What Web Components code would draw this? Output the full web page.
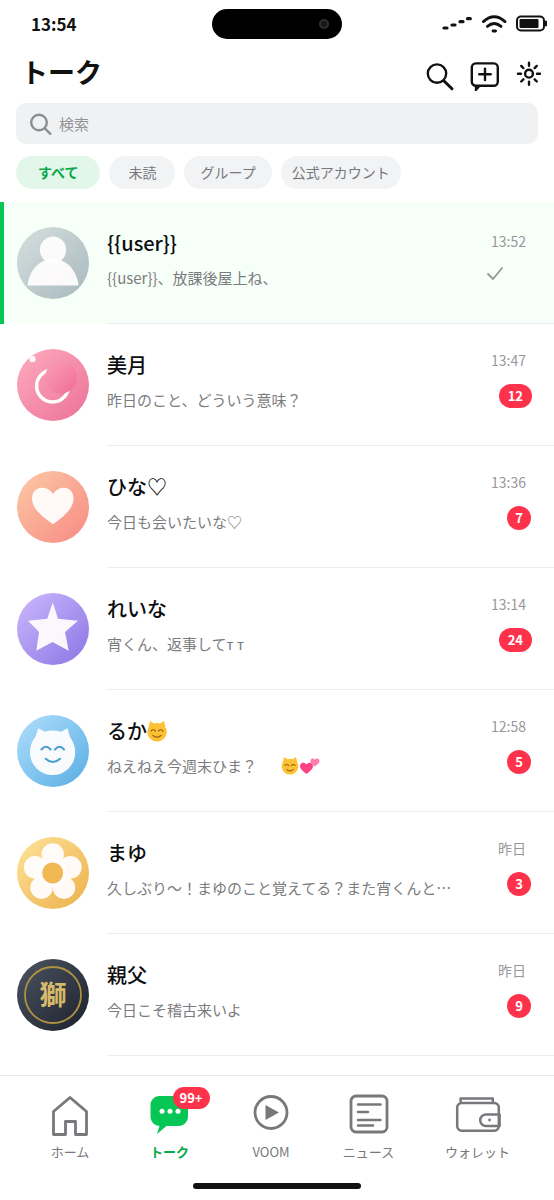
<!DOCTYPE html>
<html lang="ja">
<head>
<meta charset="utf-8">
<meta name="viewport" content="width=device-width, initial-scale=1">
<title>トーク</title>
<style>
  html { height: 100%; }
  body {
    margin: 0;
    min-height: 100%;
    display: flex;
    flex-direction: column;
    background: #fff;
    color: #111;
    font-family: "Noto Sans CJK JP", "Noto Sans", sans-serif;
  }
  main { flex: 1; }
</style>
</head>
<body>
<status-bar>13:54</status-bar>
<page-header>トーク</page-header>
<search-box label="検索"></search-box>
<filter-bar>
  <filter-chip active style="--pad: 22px">すべて</filter-chip>
  <filter-chip style="--pad: 19px">未読</filter-chip>
  <filter-chip style="--pad: 16px">グループ</filter-chip>
  <filter-chip style="--pad: 11px">公式アカウント</filter-chip>
</filter-bar>
<main>
  <chat-row selected time="13:52">
    <chat-avatar slot="avatar" kind="person"></chat-avatar>
    <span slot="name">{{user}}</span>{{user}}、放課後屋上ね、
  </chat-row>
  <chat-row time="13:47" unread="12">
    <chat-avatar slot="avatar" kind="moon"></chat-avatar>
    <span slot="name">美月</span>昨日のこと、どういう意味？
  </chat-row>
  <chat-row time="13:36" unread="7">
    <chat-avatar slot="avatar" kind="heart"></chat-avatar>
    <span slot="name">ひな♡</span>今日も会いたいな♡
  </chat-row>
  <chat-row time="13:14" unread="24">
    <chat-avatar slot="avatar" kind="star"></chat-avatar>
    <span slot="name">れいな</span>宵くん、返事してᴛ ᴛ
  </chat-row>
  <chat-row time="12:58" unread="5">
    <chat-avatar slot="avatar" kind="cat"></chat-avatar>
    <span slot="name">るか<cat-face></cat-face></span>ねえねえ今週末ひま？<cat-face spaced></cat-face><two-hearts></two-hearts>
  </chat-row>
  <chat-row time="昨日" unread="3">
    <chat-avatar slot="avatar" kind="flower"></chat-avatar>
    <span slot="name">まゆ</span>久しぶり〜！まゆのこと覚えてる？また宵くんと…
  </chat-row>
  <chat-row time="昨日" unread="9">
    <chat-avatar slot="avatar" kind="lion"></chat-avatar>
    <span slot="name">親父</span>今日こそ稽古来いよ
  </chat-row>
</main>
<tab-bar>
  <tab-item icon="home">ホーム</tab-item>
  <tab-item icon="talk" active badge="99+">トーク</tab-item>
  <tab-item icon="voom">VOOM</tab-item>
  <tab-item icon="news">ニュース</tab-item>
  <tab-item icon="wallet">ウォレット</tab-item>
</tab-bar>

<script>
const define = (name, render) => customElements.define(name, class extends HTMLElement {
  constructor() { super(); this.attachShadow({ mode: 'open' }); }
  connectedCallback() { this.shadowRoot.innerHTML = render(this); }
});

define('status-bar', () => `
<style>
  :host { display: grid; grid-template-columns: 1fr 130px 1fr; align-items: center; height: 48px; }
  .time { padding-left: 31px; font-size: 17px; line-height: 24px; font-weight: 700; }
  .island { height: 30px; border-radius: 15px; background: #000; display: flex; align-items: center; justify-content: flex-end; }
  .lens { width: 6px; height: 6px; border: 2px solid #2d2e32; border-radius: 50%; background: #17181a; margin-right: 13px; }
  .icons { display: flex; justify-content: flex-end; gap: 9px; padding-right: 7px; }
  svg { display: block; }
</style>
<div class="time"><slot></slot></div>
<div class="island"><div class="lens"></div></div>
<div class="icons">
  <svg width="31" height="20" fill="none" stroke="#111" stroke-width="3.200" stroke-linecap="round"><path d="M3 14h3M11 11h3M19 7.700h3M26.500 4.700h2.800"/></svg>
  <svg width="26" height="20" fill="none" stroke="#111" stroke-width="2.800" stroke-linecap="round"><path d="M2.400 7.600Q13.200-2.200 24 7.600M6.400 12.400Q13.200 6.600 20 12.400"/><path d="M12 17h2.600"/></svg>
  <svg width="31" height="20"><rect x="1" y="2.500" width="27" height="14" rx="4" fill="none" stroke="#111" stroke-width="2"/><rect x="3.500" y="5" width="19" height="9" rx="1" fill="#111"/><rect x="29" y="6.500" width="2" height="6" rx="1" fill="#111"/></svg>
</div>`);

define('page-header', () => `
<style>
  :host { display: flex; justify-content: space-between; height: 55px; padding: 0 10px 0 21px; box-sizing: border-box; }
  h1 { margin: 4px 0 0; font-size: 27px; line-height: 40px; font-weight: 700; }
  .actions { display: flex; gap: 14px; padding-top: 13px; }
  button { all: unset; cursor: pointer; width: 30px; height: 30px; }
  svg { display: block; fill: none; stroke: #111; stroke-width: 2.400; stroke-linecap: round; }
</style>
<h1><slot></slot></h1>
<div class="actions">
  <button aria-label="検索"><svg width="30" height="30"><circle cx="11" cy="12.600" r="9.200"/><path stroke-width="3" d="M18 20l8 7.800"/></svg></button>
  <button aria-label="新規トーク"><svg width="30" height="30"><rect x="1.800" y="2.400" width="26" height="22.400" rx="4"/><path d="M9.200 13.300h11.500M15 7.600v11.500"/><path d="M5.600 24.500v5.300l4.200-4.800" fill="#111" stroke-width="1.600" stroke-linejoin="round"/></svg></button>
  <button aria-label="設定"><svg width="30" height="30"><circle cx="15" cy="12.700" r="3.900"/><path d="M15 1.700v3M15 20.700v3M4 12.700h3M23 12.700h3M7.200 4.900l2.200 2.200M20.600 18.300l2.200 2.200M22.800 4.900l-2.200 2.200M9.400 18.300l-2.200 2.200"/></svg></button>
</div>`);

define('search-box', el => `
<style>
  :host { display: block; padding: 0 16px; }
  label { display: flex; align-items: center; gap: 7px; height: 41px; padding: 0 12px; border-radius: 10px; background: #f0f1f3; }
  svg { flex: none; fill: none; stroke: #8c8d90; stroke-width: 2.400; stroke-linecap: round; }
  input { all: unset; flex: 1; min-width: 0; font: inherit; font-size: 15px; line-height: 22px; color: #111; }
  input::placeholder { color: #929397; opacity: 1; }
</style>
<label><svg width="24" height="24" aria-hidden="true"><circle cx="11" cy="10.500" r="7.800"/><path d="M17 16.500l5.300 5.300"/></svg><input type="search" aria-label="${el.getAttribute('label')}" placeholder="${el.getAttribute('label')}"></label>`);

define('filter-bar', () => `
<style>:host { display: flex; gap: 9px; padding: 12px 16px 13px; }</style><slot></slot>`);

define('filter-chip', el => `
<style>
  :host { display: block; }
  button { all: unset; display: block; box-sizing: border-box; cursor: pointer; height: 33px; padding: 0 var(--pad); border-radius: 17px; background: #f2f3f5; color: #77787b; font-size: 14px; line-height: 33px; white-space: nowrap; }
  :host([active]) button { background: #e2f7e9; color: #0aa84a; font-weight: 700; }
</style>
<button aria-pressed="${el.hasAttribute('active')}"><slot></slot></button>`);

define('chat-row', el => {
  const unread = el.getAttribute('unread');
  return `
<style>
  :host { display: block; }
  a { display: grid; grid-template-columns: 72px minmax(0, 1fr); column-gap: 18px; padding-left: 17px; color: inherit; text-decoration: none; }
  .avatar { padding-top: 25px; }
  .body { display: flex; justify-content: space-between; height: 121px; border-bottom: 1px solid #ececef; }
  .text { min-width: 0; padding-top: 26px; }
  .name { font-size: 20px; line-height: 30px; font-weight: 500; color: #0c0d0e; white-space: nowrap; }
  .message { margin-top: 8px; font-size: 15px; line-height: 24px; color: #7b7c80; white-space: nowrap; overflow: hidden; text-overflow: ellipsis; }
  .meta { display: flex; flex-direction: column; align-items: flex-end; flex: none; padding: 26px 22px 0 0; }
  time { margin-right: 6px; font-size: 14px; line-height: 20px; color: #97989c; }
  .badge { box-sizing: border-box; min-width: 24px; height: 24px; margin-top: 14px; padding: 0 9px; border-radius: 12px; background: #fe334b; color: #fff; font-size: 13px; line-height: 24px; font-weight: 700; text-align: center; }
  .badge.single { padding: 0; margin-right: 1px; }
  .read { margin: 14px 28px 0 0; }
  :host([selected]) a { background: #f7fff9; padding-left: 13px; border-left: 4px solid #06c755; }
  :host([selected]) .meta { padding-top: 29px; }
</style>
<a href="#">
  <div class="avatar"><slot name="avatar"></slot></div>
  <div class="body">
    <div class="text">
      <div class="name"><slot name="name"></slot></div>
      <div class="message"><slot></slot></div>
    </div>
    <div class="meta">
      <time>${el.getAttribute('time')}</time>
      ${unread ? `<span class="badge${unread.length < 2 ? ' single' : ''}">${unread}</span>`
        : `<svg class="read" width="18" height="18" fill="none" stroke="#8f9894" stroke-width="1.800" role="img" aria-label="既読"><path d="M1.500 8.500l5.500 5.500L16.500 2.500"/></svg>`}
    </div>
  </div>
</a>`;
});

const avatars = {
  person: ['#d6dfdf', '#a7b9be', `<circle cx="36" cy="22.800" r="13.200"/><path d="M10.500 58.500C12 44 22 32 36 32s24 12 25.500 26.500z"/>`],
  moon: ['#fdacbd', '#ec7199', `<circle cx="15.500" cy="10" r="3.200"/><circle cx="35.600" cy="37" r="16" fill="none" stroke="#fff" stroke-width="3.400"/><circle cx="44" cy="28.500" r="16" fill="url(#m)" fill-opacity="1"/>`],
  heart: ['#fcc9a4', '#f78a84', `<path d="M36 53.200C25 45.500 15 37.500 15 27.500c0-6.500 4.500-10.800 10-10.800 4.800 0 8.800 2.600 11 6.300 2.200-3.700 6.200-6.300 11-6.300 5.500 0 9.500 4.300 9.500 10.800 0 10-9.500 18-20.500 25.700z"/>`],
  star: ['#cdb9fc', '#8975e4', `<path d="M35.800 9.500L41 25.700l20 2L48 39l3.700 18.700L35.500 49l-16.200 8.700L22 39 11 27.700l19.300-2z"/>`],
  cat: ['#b0dffc', '#58ade4', `<path d="M21.300 13.200l6.200 3.600q8-2.600 16.500 0l6.500-3.600 2.500 8.800c3.300 5 5.200 9 5.200 15.500a22.600 22.600 0 0 1-45.200 0C13 31 15 26 18.800 21z"/><path d="M24.500 34.500q4.500-5.500 9 0M38 34.500q4.500-5.500 9 0M28.700 43.700q7 6.500 14.400 0" fill="none" stroke="#459ed2" stroke-width="2" stroke-linecap="round"/>`],
  flower: ['#fde39a', '#edb04a', `<circle cx="35.700" cy="17.500" r="11.200"/><circle cx="53.500" cy="30.300" r="11.200"/><circle cx="47" cy="50.700" r="11.200"/><circle cx="24.500" cy="50.700" r="11.200"/><circle cx="18" cy="30.300" r="11.200"/><circle cx="35.700" cy="36" r="14"/><circle cx="35.700" cy="36" r="10.500" fill="#efb54c"/>`],
  lion: ['#4c5462', '#1c212c', `<circle cx="36" cy="36" r="28" fill="none" stroke="#ad9242" stroke-width="1.800"/><text x="36" y="45.500" text-anchor="middle" font-size="27" font-weight="700" fill="#e2c36c">獅</text>`],
};
define('chat-avatar', el => {
  const [from, to, art] = avatars[el.getAttribute('kind')];
  return `
<style>
  :host { display: block; width: 72px; height: 72px; border-radius: 50%; overflow: hidden; background: linear-gradient(135deg, ${from}, ${to}); }
  svg { display: block; fill: #fffdfd; fill-opacity: .95; }
</style>
<svg width="72" height="72" aria-hidden="true"><defs><linearGradient id="m" x1="0" y1="0" x2="1" y2="1"><stop offset="0" stop-color="#fa9fb6"/><stop offset="1" stop-color="#ef6c98"/></linearGradient></defs>${art}</svg>`;
});

define('cat-face', el => `
<style>
  :host { display: inline-block; width: 20px; height: 21px; vertical-align: -3px; }
  :host([spaced]) { width: 18px; height: 18px; margin-left: 24px; }
  svg { display: block; width: 100%; height: 100%; }
</style>
<svg viewBox="0 0 20 21" aria-hidden="true"><path d="M3 0l4 2.500q3-.8 6 0L17 0l1.400 6a9.700 9.700 0 1 1-16.800 0z" fill="#fcc135"/><path d="M4 10q2.200-2.500 4.500 0M11.500 10q2.200-2.500 4.500 0M6 14.500q4 3.400 8 0" fill="none" stroke="#9b641d" stroke-width="1.200" stroke-linecap="round"/></svg>`);

define('two-hearts', () => `
<style>:host { display: inline-block; width: 20px; height: 18px; margin-left: 1px; vertical-align: -3px; } svg { display: block; }</style>
<svg width="20" height="18" aria-hidden="true"><path d="M6.500 17C2 13.500 0 11.500 0 9c0-3.500 4.500-4.700 6.500-1.500C8.500 4.300 13 5.500 13 9c0 2.500-2 4.500-6.500 8z" fill="#fb4284"/><path d="M14.800 9.500c-3-2.300-4.400-3.700-4.400-5.500 0-2.600 3-3.400 4.400-1.200 1.400-2.200 4.700-1.400 4.700 1.200 0 1.800-1.700 3.200-4.700 5.500z" fill="#ff7bac"/></svg>`);

define('tab-bar', () => `
<style>
  :host { display: block; border-top: 1px solid #e9e9eb; background: #fff; }
  nav { display: grid; grid-template-columns: 100fr 99fr 104fr 91fr 127fr; height: 107px; padding: 0 13px 0 20px; }
  .home { width: 168px; height: 6px; margin: 0 auto 11px; border-radius: 3px; background: #111; }
</style>
<nav><slot></slot></nav>
<div class="home"></div>`);

const icons = {
  home: `<path d="M6.500 18.500L23 4.500l16.500 14v23H28.500V28.500h-10v13h-12z"/>`,
  talk: `<path d="M12 3h20a9 9 0 0 1 9 9v12a9 9 0 0 1-9 9H19.500L10 41l2.500-8A9 9 0 0 1 3.500 24V12A9 9 0 0 1 12 3z" fill="#06c755" stroke="none"/><g fill="#fff" stroke="none"><circle cx="15" cy="18.300" r="2.500"/><circle cx="23" cy="18.300" r="2.500"/><circle cx="31" cy="18.300" r="2.500"/></g>`,
  voom: `<circle cx="23" cy="19.500" r="16"/><path d="M17.500 12v15l13.500-7.500z" fill="#77787c" stroke="none"/>`,
  news: `<rect x="5" y="3" width="36" height="36" rx="5"/><path d="M12 11.500h22.500M12 19h10M12 27h22.500M12 32.500h15" stroke-linecap="round" stroke-width="2.500"/>`,
  wallet: `<path d="M5.600 10V5.600h32.200V10M6.500 10h33a4.300 4.300 0 0 1 4.300 4.300v19a4.400 4.400 0 0 1-4.400 4.400H6.600a4.400 4.400 0 0 1-4.400-4.400V14.300A4.300 4.300 0 0 1 6.500 10z" stroke-width="2.500"/><path d="M44.600 21.400H31a5.800 5.800 0 0 0 0 11.600h13.600z" stroke-width="2.500"/><circle cx="34.500" cy="27" r="1.400" fill="#77787c" stroke="none"/>`,
};
define('tab-item', el => `
<style>
  :host { display: block; }
  a { display: flex; flex-direction: column; align-items: center; padding-top: 17px; color: #77787c; text-decoration: none; font-size: 13px; line-height: 20px; white-space: nowrap; }
  .icon { position: relative; height: 44px; margin-bottom: 5px; }
  svg { display: block; fill: none; stroke: #77787c; stroke-width: 2.800; stroke-linejoin: round; }
  .badge { position: absolute; left: 26px; top: -6px; box-sizing: border-box; min-width: 36px; height: 22px; padding: 0 7px; border-radius: 11px; background: #fe334b; color: #fff; font-size: 13px; line-height: 22px; font-weight: 700; text-align: center; }
  :host([active]) a { color: #0aa84a; font-weight: 700; }
</style>
<a href="#"><span class="icon"><svg width="46" height="44" aria-hidden="true">${icons[el.getAttribute('icon')]}</svg>${el.hasAttribute('badge') ? `<span class="badge">${el.getAttribute('badge')}</span>` : ''}</span><span><slot></slot></span></a>`);
</script>
</body>
</html>
